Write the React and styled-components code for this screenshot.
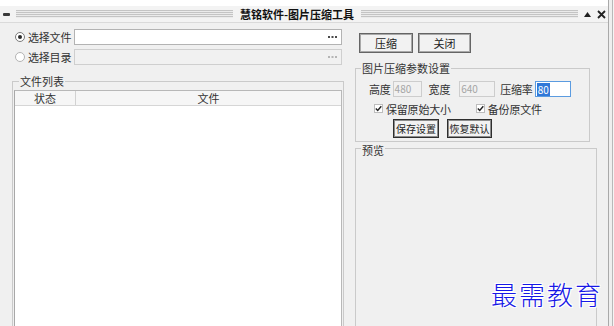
import React from 'react'
import styled, { createGlobalStyle } from 'styled-components'

const GlobalStyle = createGlobalStyle`
  html, body {
    margin: 0;
    padding: 0;
    background: #f0f0f0;
  }
  body {
    font-family: "Noto Sans CJK SC", "Liberation Sans", sans-serif;
    font-size: 11px;
    color: #222;
  }
`

const Screen = styled.div`
  position: relative;
  width: 614px;
  height: 326px;
  overflow: hidden;
  display: flex;
  background: #f0f0f0;
`

const Window = styled.div`
  width: 608px;
  display: flex;
  flex-direction: column;
`

const TopGap = styled.div`
  height: 6px;
  background: #ffffff;
`

const TitleBar = styled.div`
  height: 16px;
  display: flex;
  align-items: center;
  padding: 0 2px 0 3px;
  background: #f3f3f3;
  border-bottom: 1px solid #dadada;
`

const Minus = styled.span`
  width: 7px;
  height: 3px;
  background: #3a3a3a;
  border-radius: 1px;
  margin-right: 6px;
`

const Grip = styled.div`
  flex: 1;
  height: 8px;
  background: repeating-linear-gradient(to bottom, #c4c4c4 0 1px, #ebebeb 1px 2px);
`

const Title = styled.span`
  margin: 0 7px;
  font-weight: bold;
  font-size: 11px;
  line-height: 16px;
  color: #111;
  white-space: nowrap;
`

const TitleIcon = styled.svg`
  display: block;
  margin-left: ${p => p.$gap}px;
`

const Main = styled.div`
  flex: 1;
  display: flex;
  min-height: 0;
`

const LeftPane = styled.div`
  width: 347px;
  box-sizing: border-box;
  padding: 6px 0 0 12px;
  display: flex;
  flex-direction: column;
`

const PathRow = styled.div`
  display: flex;
  align-items: center;
  height: 16px;
  padding-left: 3px;
  margin-top: ${p => p.$top || 0}px;
  color: #333;
`

const Radio = styled.span`
  width: 10px;
  height: 10px;
  box-sizing: border-box;
  border-radius: 50%;
  border: 1px solid ${p => (p.$on ? '#7a7a7a' : '#b4b4b4')};
  background: #fff;
  display: flex;
  align-items: center;
  justify-content: center;
  margin-right: 3px;

  &::after {
    content: '';
    width: 4px;
    height: 4px;
    border-radius: 50%;
    background: ${p => (p.$on ? '#2a2a2a' : 'transparent')};
  }
`

const Label = styled.span`
  white-space: nowrap;
  line-height: 16px;
  margin-left: ${p => p.$ml || 0}px;
  letter-spacing: -0.2px;
`

const PathField = styled.div`
  margin-left: 3px;
  width: 268px;
  height: 16px;
  box-sizing: border-box;
  border: 1px solid ${p => (p.$disabled ? '#cfcfcf' : '#b3b3b3')};
  background: ${p => (p.$disabled ? '#f1f1f1' : '#ffffff')};
  display: flex;
  align-items: center;
  justify-content: flex-end;
  padding-right: 4px;
`

const Group = styled.fieldset`
  margin: ${p => p.$top || 0}px 0 0 0;
  padding: ${p => p.$pad};
  border: 1px solid #cacaca;
  min-inline-size: 0;
  box-sizing: border-box;
  width: ${p => p.$w}px;
  display: flex;
  flex-direction: column;
  ${p => p.$grow && 'flex: 1; margin-bottom: -6px;'}
`

const Legend = styled.legend`
  margin-left: 5px;
  padding: ${p => p.$pt || 0}px 1px 0 1px;
  line-height: ${p => p.$lh || 14}px;
  font-size: 11px;
  color: #333;
  white-space: nowrap;
`

const FileList = styled.div`
  flex: 1;
  border: 1px solid #b8b8b8;
  border-left-color: #a8a8a8;
  background: #ffffff;
  display: flex;
  flex-direction: column;
`

const ListHeader = styled.div`
  display: flex;
  height: 14px;
  background: #f6f6f6;
  border-bottom: 1px solid #d6d6d6;
`

const HeaderCell = styled.div`
  ${p => (p.$w ? `width: ${p.$w}px;` : 'flex: 1;')}
  text-align: center;
  line-height: 14px;
  color: #333;
  border-right: ${p => (p.$w ? '1px solid #d2d2d2' : 'none')};
`

const RightPane = styled.div`
  flex: 1;
  display: flex;
  flex-direction: column;
  padding-left: 8px;
`

const ButtonRow = styled.div`
  display: flex;
  gap: ${p => p.$gap}px;
  margin-top: ${p => p.$top}px;
  padding-left: ${p => p.$pl}px;
`

const Button = styled.div`
  width: ${p => p.$w}px;
  height: ${p => p.$h}px;
  box-sizing: border-box;
  border: 1px solid ${p => (p.$dark ? '#2e2e2e' : '#656565')};
  box-shadow: inset 0 0 0 1px ${p => (p.$dark ? '#8c8c8c' : '#a9a9a9')};
  background: #f2f2f2;
  display: flex;
  align-items: center;
  justify-content: center;
  color: #222;
  white-space: nowrap;
  line-height: 1;
  font-size: ${p => (p.$dark ? '10px' : '11px')};
`

const ParamRow = styled.div`
  display: flex;
  align-items: center;
  height: ${p => p.$h}px;
  margin-top: ${p => p.$top || 0}px;
  padding-left: ${p => p.$pl}px;
  color: #333;
`

const SmallField = styled.div`
  margin-left: ${p => p.$ml || 0}px;
  width: ${p => p.$w}px;
  height: 16px;
  box-sizing: border-box;
  border: 1px solid ${p => (p.$focus ? '#5b9be0' : '#cdcdcd')};
  background: ${p => (p.$focus ? '#ffffff' : '#f1f1f1')};
  color: #a5a5a5;
  font-size: 10px;
  line-height: 14px;
  padding-left: 1px;
  display: flex;
  align-items: center;
`

const Selected = styled.span`
  background: #3078d8;
  color: #ffffff;
  padding: 0 1px;
  line-height: 13px;
`

const CheckBox = styled.span`
  width: 9px;
  height: 9px;
  box-sizing: border-box;
  border: 1px solid #bdbdbd;
  background: #fff;
  margin-left: ${p => p.$ml || 0}px;
  margin-right: 3px;
  display: flex;
  align-items: center;
  justify-content: center;
`

const Watermark = styled.div`
  position: absolute;
  left: 491px;
  top: 279px;
  font-family: "Noto Sans CJK SC", sans-serif;
  font-size: 26px;
  font-weight: 300;
  letter-spacing: 2px;
  line-height: 30px;
  color: #1717e6;
  white-space: nowrap;
  text-shadow:
    1px 1px 0 #fff, -1px -1px 0 #fff, 1px -1px 0 #fff, -1px 1px 0 #fff,
    0 0 3px #fff;
`

const EdgeStrip = styled.div`
  width: 6px;
  box-sizing: border-box;
  border-left: 1px solid #a9a9a9;
  background: linear-gradient(to right, #eeeeee 0 3px, #b8b8b8 3px 4px, #f4f4f4 4px);
`

function Dots({ light }) {
  const fill = light ? '#b5b5b5' : '#4a4a4a'
  return (
    <svg width="9" height="2" viewBox="0 0 9 2">
      <rect x="0" y="0" width="2" height="2" fill={fill} />
      <rect x="3.5" y="0" width="2" height="2" fill={fill} />
      <rect x="7" y="0" width="2" height="2" fill={fill} />
    </svg>
  )
}

function Check() {
  return (
    <svg width="7" height="7" viewBox="0 0 7 7">
      <path d="M0.8 3.6 L2.7 5.5 L6.3 1.2" fill="none" stroke="#222" strokeWidth="1.4" />
    </svg>
  )
}

export default function App() {
  return (
    <Screen>
      <GlobalStyle />
      <Window>
        <TopGap />
        <TitleBar>
          <Minus />
          <Grip />
          <Title>慧铭软件-图片压缩工具</Title>
          <Grip />
          <TitleIcon $gap={6} width="7" height="5" viewBox="0 0 7 5">
            <path d="M3.5 0 L7 5 L0 5 Z" fill="#222" />
          </TitleIcon>
          <TitleIcon $gap={6} width="9" height="9" viewBox="0 0 9 9">
            <path d="M1 1 L8 8 M8 1 L1 8" stroke="#222" strokeWidth="1.8" />
          </TitleIcon>
        </TitleBar>

        <Main>
          <LeftPane>
            <PathRow>
              <Radio $on />
              <Label>选择文件</Label>
              <PathField>
                <Dots />
              </PathField>
            </PathRow>
            <PathRow $top={4}>
              <Radio />
              <Label>选择目录</Label>
              <PathField $disabled>
                <Dots light />
              </PathField>
            </PathRow>

            <Group $top={9} $w={332} $pad="2px 1px 0 1px" $grow>
              <Legend>文件列表</Legend>
              <FileList>
                <ListHeader>
                  <HeaderCell $w={60}>状态</HeaderCell>
                  <HeaderCell>文件</HeaderCell>
                </ListHeader>
              </FileList>
            </Group>
          </LeftPane>

          <RightPane>
            <ButtonRow $top={10} $pl={4} $gap={5}>
              <Button $w={54} $h={20}>压缩</Button>
              <Button $w={53} $h={20}>关闭</Button>
            </ButtonRow>

            <Group $top={8} $w={235} $pad="6px 0 3px 0">
              <Legend>图片压缩参数设置</Legend>
              <ParamRow $h={16} $pl={13}>
                <Label>高度</Label>
                <SmallField $ml={2} $w={29}>480</SmallField>
                <Label $ml={7}>宽度</Label>
                <SmallField $ml={9} $w={36}>640</SmallField>
                <Label $ml={5}>压缩率</Label>
                <SmallField $ml={2} $w={36} $focus>
                  <Selected>80</Selected>
                </SmallField>
              </ParamRow>
              <ParamRow $h={13} $top={5} $pl={18}>
                <CheckBox>
                  <Check />
                </CheckBox>
                <Label>保留原始大小</Label>
                <CheckBox $ml={25}>
                  <Check />
                </CheckBox>
                <Label>备份原文件</Label>
              </ParamRow>
              <ButtonRow $top={4} $pl={37} $gap={8}>
                <Button $w={46} $h={19} $dark>保存设置</Button>
                <Button $w={45} $h={19} $dark>恢复默认</Button>
              </ButtonRow>
            </Group>

            <Group $w={242} $pad="0" $grow>
              <Legend $lh={8} $pt={4}>预览</Legend>
            </Group>
          </RightPane>
        </Main>
      </Window>
      <EdgeStrip />
      <Watermark>最需教育</Watermark>
    </Screen>
  )
}
